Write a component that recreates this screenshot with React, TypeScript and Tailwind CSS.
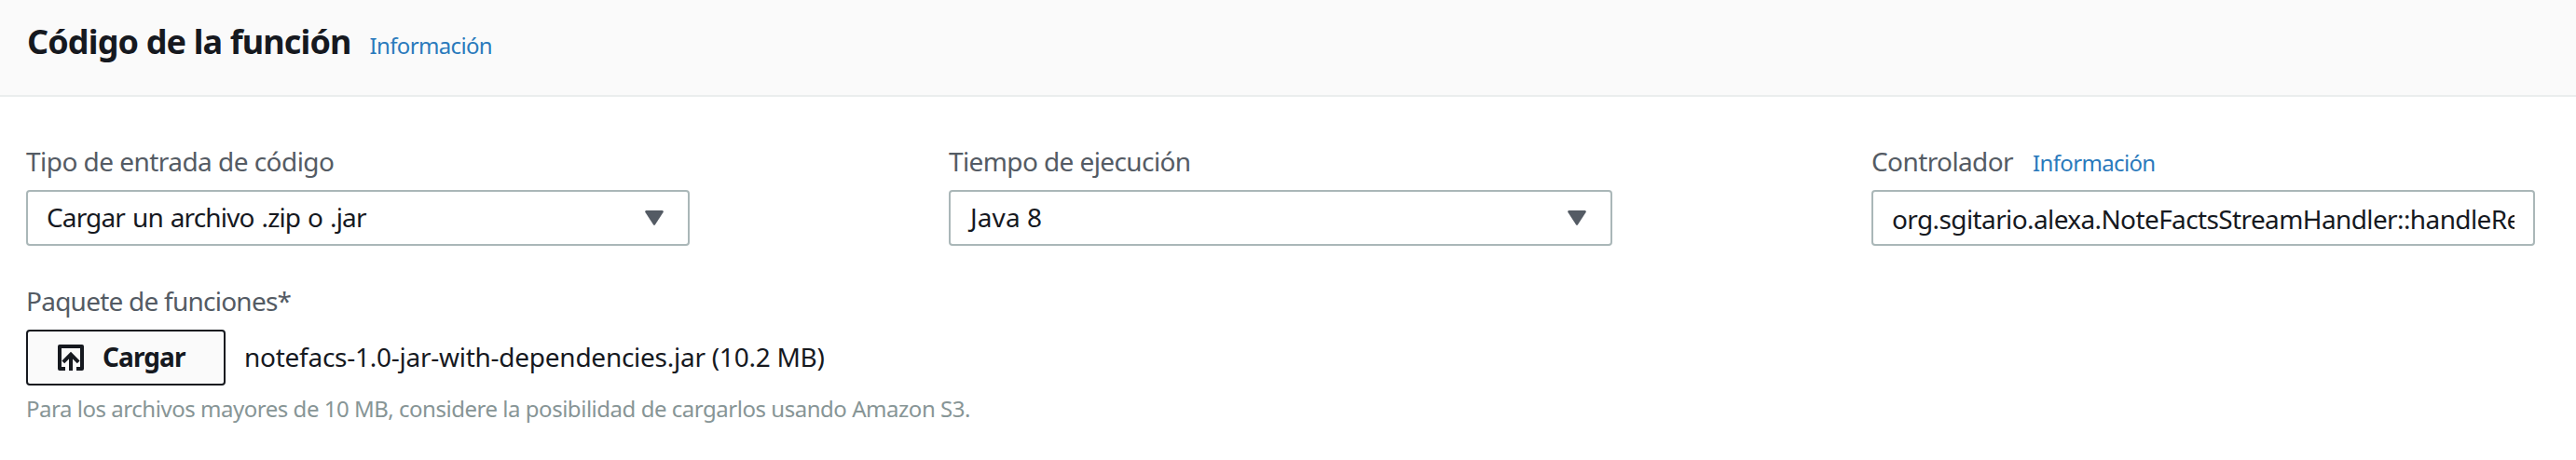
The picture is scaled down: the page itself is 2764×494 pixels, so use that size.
import type { ReactNode } from "react";

function Label({ children }: { children: ReactNode }) {
  return <div className="mb-[11px] flex h-10 items-baseline whitespace-nowrap text-[#545b64]">{children}</div>;
}

function InfoLink({ className }: { className: string }) {
  return (
    <a href="#" className={`text-2xl tracking-[-0.65px] text-[#2a7abc] ${className}`}>
      Información
    </a>
  );
}

function Select({ children }: { children: ReactNode }) {
  return (
    <button
      type="button"
      className="flex h-[60px] w-full items-center justify-between rounded-[4px] border-2 border-[#aab7b8] bg-white pr-[26px] pl-5 text-left"
    >
      {children}
      <svg width="20" height="16" viewBox="0 0 20 16" fill="#545b64" aria-hidden="true">
        <path d="M1.4 0H18.6Q20.4 0.3 19.6 2L11 15.3Q10 16.6 9 15.3L0.4 2Q-0.4 0.3 1.4 0Z" />
      </svg>
    </button>
  );
}

function UploadIcon() {
  return (
    <svg width="28" height="28" viewBox="0 0 28 28" fill="none" stroke="#16191f" strokeWidth="4" aria-hidden="true">
      <path d="M8 26H2V2H26V26H20" strokeLinejoin="round" />
      <path d="M14 28V11M5.8 18.8L14 10.6L22.2 18.8" />
    </svg>
  );
}

export default function App() {
  return (
    <main
      lang="es"
      className="h-[494px] w-full overflow-hidden bg-white font-['Noto_Sans','Open_Sans',sans-serif] text-[28px] leading-10 text-[#16191f]"
    >
      <header className="flex h-[104px] items-baseline border-b-2 border-[#eaeded] bg-[#fafafa] pr-7 pl-[29px] pt-[21px]">
        <h2 className="text-4xl leading-[48px] font-bold tracking-[-0.87px] whitespace-nowrap">Código de la función</h2>
        <InfoLink className="ml-5" />
      </header>

      <div className="px-7 pt-[49px]">
        <div className="grid grid-cols-[712px_712px_712px] gap-x-[278px]">
          <div>
            <Label>
              <span className="tracking-[-0.54px]">Tipo de entrada de código</span>
            </Label>
            <Select>
              <span className="pb-0.5 tracking-[-0.86px] [word-spacing:1.5px]">Cargar un archivo .zip o .jar</span>
            </Select>
          </div>
          <div>
            <Label>
              <span className="tracking-[-0.6px]">Tiempo de ejecución</span>
            </Label>
            <Select>
              <span className="pb-0.5 pl-px tracking-[0.1px]">Java 8</span>
            </Select>
          </div>
          <div>
            <Label>
              <span className="tracking-[-0.6px]">Controlador</span>
              <InfoLink className="ml-[21px]" />
            </Label>
            <div className="flex h-[60px] items-center rounded-[4px] border-2 border-[#aab7b8] px-5">
              <input
                type="text"
                aria-label="Controlador"
                defaultValue="org.sgitario.alexa.NoteFactsStreamHandler::handleRequest"
                className="h-10 w-full bg-transparent pt-0.5 tracking-[-0.61px] outline-none"
              />
            </div>
          </div>
        </div>

        <div className="mt-[39px]">
          <Label>
            <span className="tracking-[-0.76px]">Paquete de funciones*</span>
          </Label>
          <div className="flex items-center">
            <button
              type="button"
              className="flex h-[60px] w-[214px] items-center rounded-[4px] border-2 border-[#16191f] bg-[#fafafa] pl-8"
            >
              <UploadIcon />
              <span className="ml-5 pb-0.5 font-bold tracking-[-0.9px]">Cargar</span>
            </button>
            <span className="ml-5 pb-0.5 tracking-[-0.26px] whitespace-nowrap">
              notefacs-1.0-jar-with-dependencies.jar (10.2 MB)
            </span>
          </div>
          <p className="mt-[7px] text-2xl leading-9 tracking-[-0.47px] whitespace-nowrap text-[#879596]">
            Para los archivos mayores de 10 MB, considere la posibilidad de cargarlos usando Amazon S3.
          </p>
        </div>
      </div>
    </main>
  );
}
